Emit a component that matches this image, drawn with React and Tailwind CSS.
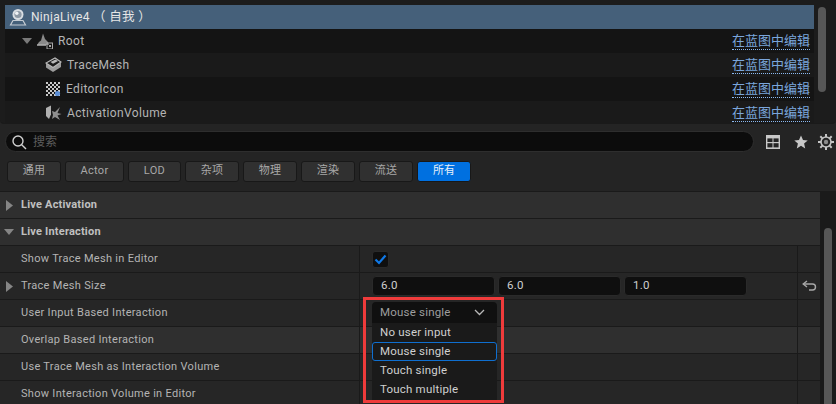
import React from "react";

const font = "font-['Roboto','Noto_Sans_CJK_SC',sans-serif]";

function Actor() {
  return (
    <svg width="18" height="18" viewBox="0 0 18 18" className="shrink-0">
      <circle cx="9" cy="6.5" r="5.5" fill="#d8dde2" />
      <circle cx="9" cy="6.5" r="3.6" fill="#8c98a4" />
      <circle cx="7.8" cy="5.2" r="1.7" fill="#eef1f4" />
      <path d="M4 12.5h10l2.5 4.5h-15z" fill="none" stroke="#c5ccd3" strokeWidth="1.2" />
    </svg>
  );
}
function RootIcon() {
  return (
    <svg width="16" height="16" viewBox="0 0 16 16" className="shrink-0">
      <path d="M6 0.5 8 6 11 9 12 12H0l2-3 2-1.5z" fill="#8a8a8a" />
      <rect x="0" y="11.5" width="9" height="1.2" fill="#bdbdbd" />
      <rect x="10" y="10" width="5.5" height="6" fill="none" stroke="#a8a8a8" strokeWidth="1" />
      <rect x="12" y="12" width="2" height="2" fill="#a8a8a8" />
    </svg>
  );
}
function MeshIcon() {
  return (
    <svg width="17" height="16" viewBox="0 0 17 16" className="shrink-0">
      <path d="M1 6 10 1l6 4v5l-8 5-7-4.5z" fill="#9c9c9c" />
      <path d="M1 6l7 4.5L16 5 10 1z" fill="#1a1a1a" stroke="#b8b8b8" strokeWidth="1.1" />
      <path d="M5.5 5 10.5 2.6 13 4 8 6.7z" fill="#b8b8b8" />
    </svg>
  );
}
function CheckerIcon() {
  const cells = [];
  for (let y = 0; y < 7; y++)
    for (let x = 0; x < 7; x++)
      if ((x + y) % 2 === 0) cells.push(<rect key={x + "-" + y} x={1 + x * 2} y={1 + y * 2} width="2" height="2" fill="#c8c8c8" />);
  return (
    <svg width="16" height="16" viewBox="0 0 16 16" className="shrink-0">
      {cells}
      <circle cx="12.5" cy="12.5" r="2.6" fill="#5c8fd6" />
    </svg>
  );
}
function VolumeIcon() {
  return (
    <svg width="17" height="16" viewBox="0 0 17 16" className="shrink-0">
      <path d="M1 3l5-2.5v9L4 14 1 11z" fill="#b0b0b0" />
      <path d="M7 6l3 1 5-5-2.5 6 4 1-4 1.5L15 15l-5-3-3 2 1-4z" fill="#8f8f8f" />
    </svg>
  );
}
function RootTri() {
  return (
    <svg width="10" height="6" viewBox="0 0 10 6" className="shrink-0">
      <path d="M0 0h10L5 6z" fill="#7a7a7a" />
    </svg>
  );
}
function SideTri() {
  return (
    <svg width="7" height="11" viewBox="0 0 7 11" className="shrink-0 block">
      <path d="M0 0v11l7-5.5z" fill="#858585" />
    </svg>
  );
}
function DownTri() {
  return (
    <svg width="10" height="6" viewBox="0 0 10 6" className="shrink-0 block">
      <path d="M0 0h10L5 6z" fill="#858585" />
    </svg>
  );
}

const treeRows = [
  { label: "Root", icon: <RootIcon />, pad: "pl-[17px]", bg: "bg-[#141414]", tri: true },
  { label: "TraceMesh", icon: <MeshIcon />, pad: "pl-[40px]", bg: "bg-[#1a1a1a]" },
  { label: "EditorIcon", icon: <CheckerIcon />, pad: "pl-[40px]", bg: "bg-[#141414]" },
  { label: "ActivationVolume", icon: <VolumeIcon />, pad: "pl-[40px]", bg: "bg-[#1a1a1a]", last: true },
];

const tabs = [
  ["通用", "w-[54px]"],
  ["Actor", "w-[59px]"],
  ["LOD", "w-[53px]"],
  ["杂项", "w-[54px]"],
  ["物理", "w-[54px]"],
  ["渲染", "w-[54px]"],
  ["流送", "w-[54px]"],
];

function Field({ children }) {
  return (
    <div className="h-[20px] w-[123px] bg-[#0f0f0f] border border-[#2a2a2a] rounded-[4px] flex items-center pl-[8px] text-[11.5px] text-[#d0d0d0] tracking-[0.2px]">
      {children}
    </div>
  );
}

function Row({ label, tri, hl, children, reset }) {
  return (
    <div className={"flex border-b border-[#1a1a1a] h-[27px] " + (hl ? "bg-[#2f2f2f]" : "bg-[#262626]")}>
      <div className="w-[359px] shrink-0 flex items-center pl-[6px] text-[11px] tracking-[0.3px] text-[#b4b4b4]">
        <span className="w-[15px] shrink-0">{tri && <SideTri />}</span>
        {label}
      </div>
      <div className="w-[438px] shrink-0 border-l border-[#1a1a1a] flex items-center pl-[12px] gap-[3px]">{children}</div>
      <div className="flex-1 border-l border-[#1a1a1a] flex items-center justify-center">
        {reset && (
          <svg width="15" height="12" viewBox="0 0 15 12" fill="none" stroke="#a8a8a8" strokeWidth="1.4">
            <path d="M5 1 1.2 4 5 7" />
            <path d="M1.5 4H10.5c1.9 0 3 1.2 3 3s-1.1 3-3 3H7" />
          </svg>
        )}
      </div>
    </div>
  );
}

export default function App() {
  return (
    <div className={"relative w-[836px] h-[404px] overflow-hidden bg-[#242424] text-[#c0c0c0] " + font}>
      {/* Outline tree */}
      <div className="h-[124px] overflow-hidden bg-[#1c1c1c] pt-[5px] pl-[5px] flex border-b border-[#1a1a1a] rounded-b-[4px]">
        <div className="w-[809px] shrink-0">
          <div className="h-[24px] bg-[#45607a] flex items-center pl-[4px] gap-[4px] text-[12px] text-[#e6e6e6] tracking-[0.3px]">
            <Actor />
            <span>NinjaLive4 <span className="text-[12.5px]">（ 自我 ）</span></span>
          </div>
          {treeRows.map((r) => (
            <div key={r.label} className={"flex items-center justify-between pr-[4px] h-[24px] " + r.pad + " " + r.bg}>
              <div className="flex items-center gap-[5px] text-[12px] tracking-[0.35px] text-[#b4b4b4]">
                {r.tri && <RootTri />}
                {r.icon}
                <span>{r.label}</span>
              </div>
              <span className="text-[13px] leading-[16px] text-[#7ba6dc] border-b border-dotted border-[#8ab8f0]">在蓝图中编辑</span>
            </div>
          ))}
        </div>
        <div className="ml-[4px] mt-[2px] w-[8px] h-[85px] rounded-full bg-[#575757]" />
      </div>

      {/* Search */}
      <div className="flex items-center h-[21px] mt-[7px] pl-[5px]">
        <div className="w-[749px] h-[21px] rounded-full bg-[#0c0c0c] border border-[#2e2e2e] flex items-center pl-[5px] gap-[6px]">
          <svg width="16" height="16" viewBox="0 0 16 16" fill="none" stroke="#d0d0d0" strokeWidth="1.4">
            <circle cx="7" cy="7" r="5" />
            <path d="M10.7 10.7 15 15" />
          </svg>
          <span className="text-[12px] text-[#5c5c5c]">搜索</span>
        </div>
        <div className="ml-[12px]">
          <svg width="14" height="14" viewBox="0 0 14 14" className="block">
            <rect x="0" y="0" width="14" height="14" fill="#c8c8c8" />
            <rect x="1.4" y="3.4" width="5.1" height="3.6" fill="#242424" />
            <rect x="7.5" y="3.4" width="5.1" height="3.6" fill="#242424" />
            <rect x="1.4" y="8.2" width="5.1" height="4.2" fill="#242424" />
            <rect x="7.5" y="8.2" width="5.1" height="4.2" fill="#242424" />
          </svg>
        </div>
        <div className="ml-[14px]">
          <svg width="14" height="14" viewBox="0 0 14 14" className="block">
            <path d="M7 0.5 9 5l4.7.4-3.6 3.1 1.1 4.9L7 10.8 2.8 13.4l1.1-4.9L.3 5.4 5 5z" fill="#c8c8c8" />
          </svg>
        </div>
        <div className="ml-[10px]">
          <svg width="16" height="16" viewBox="0 0 16 16" fill="none" className="block">
            <circle cx="8" cy="8" r="5" stroke="#c4c4c4" strokeWidth="1.6" />
            <circle cx="8" cy="8" r="2.2" fill="#8a8a8a" />
            <path d="M8 0v3M8 13v3M0 8h3M13 8h3M2.3 2.3l2.1 2.1M11.6 11.6l2.1 2.1M13.7 2.3l-2.1 2.1M4.4 11.6l-2.1 2.1" stroke="#c4c4c4" strokeWidth="2" />
          </svg>
        </div>
      </div>

      {/* Tabs */}
      <div className="flex h-[21px] mt-[9px] pl-[7px] gap-[4px] text-[11px]">
        {tabs.map(([t, w]) => (
          <div key={t} className={"h-[21px] rounded-[3px] bg-[#303030] border border-[#181818] flex items-center justify-center text-[#a8a8a8] tracking-[0.3px] " + w}>
            {t}
          </div>
        ))}
        <div className="h-[21px] w-[54px] rounded-[3px] bg-[#0070e0] border border-[#181818] flex items-center justify-center text-[#e8f0f8]">所有</div>
      </div>

      {/* Details */}
      <div className="flex mt-[9px] h-[213px]">
        <div className="w-[820px] shrink-0 border-t border-[#1a1a1a] overflow-hidden">
          <div className="h-[27px] bg-[#2f2f2f] border-b border-[#1a1a1a] flex items-center pl-[6px] text-[11px] font-bold tracking-[0.2px] text-[#c0c0c0]">
            <span className="w-[15px] shrink-0"><SideTri /></span>
            Live Activation
          </div>
          <div className="h-[27px] bg-[#2f2f2f] border-b border-[#1a1a1a] flex items-center pl-[4px] text-[11px] font-bold tracking-[0.2px] text-[#c0c0c0]">
            <span className="w-[17px] shrink-0"><DownTri /></span>
            Live Interaction
          </div>
          <Row label="Show Trace Mesh in Editor">
            <div className="w-[17px] h-[17px] rounded-[3px] bg-[#0f0f0f] border border-[#2a2a2a] flex items-center justify-center">
              <svg width="13" height="11" viewBox="0 0 13 11" fill="none" stroke="#0f78e6" strokeWidth="2.2">
                <path d="M1.5 5.5 5 9 11.5 1.5" />
              </svg>
            </div>
          </Row>
          <Row label="Trace Mesh Size" tri reset>
            <Field>6.0</Field>
            <Field>6.0</Field>
            <Field>1.0</Field>
          </Row>
          <Row label="User Input Based Interaction" />
          <Row label="Overlap Based Interaction" hl />
          <Row label="Use Trace Mesh as Interaction Volume" />
          <Row label="Show Interaction Volume in Editor" />
        </div>
        <div className="flex-1 bg-[#1a1a1a] pl-[4px] pt-[37px]">
          <div className="w-[8px] h-[180px] rounded-t-full bg-[#575757]" />
        </div>
      </div>

      {/* Dropdown overlay with annotation */}
      <div className="absolute left-[363px] top-[297px] w-[141px] h-[106px] border-[3px] border-[#ef3b3b] pl-[6px] pt-[2px]">
        <div className="w-[125px] h-[21px] bg-[#101010] rounded-t-[4px] flex items-center justify-between pl-[8px] pr-[12px] text-[11.5px] tracking-[0.2px] text-[#9e9e9e]">
          <span>Mouse single</span>
          <svg width="11" height="7" viewBox="0 0 11 7" fill="none" stroke="#b8b8b8" strokeWidth="1.3">
            <path d="M1 1l4.5 4.5L10 1" />
          </svg>
        </div>
        <div className="w-[125px] bg-[#1a1a1a] text-[11.5px] tracking-[0.2px] text-[#d0d0d0] pb-[1px]">
          <div className="h-[19px] flex items-center pl-[8px]">No user input</div>
          <div className="h-[19px] flex items-center pl-[7px] border border-[#0f6fd0] rounded-[3px]">Mouse single</div>
          <div className="h-[19px] flex items-center pl-[8px]">Touch single</div>
          <div className="h-[19px] flex items-center pl-[8px]">Touch multiple</div>
        </div>
      </div>
    </div>
  );
}
